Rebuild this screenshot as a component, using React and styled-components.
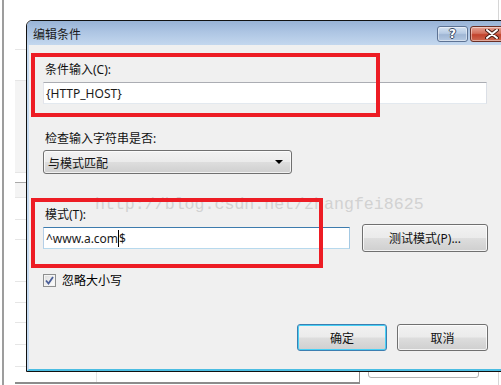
import React from "react";
import styled, { createGlobalStyle } from "styled-components";

const GlobalStyle = createGlobalStyle`
  html, body {
    margin: 0;
    padding: 0;
    background: #ffffff;
  }
  body {
    font-family: "Noto Sans", "Noto Sans CJK SC", sans-serif;
    font-size: 12px;
  }
`;

const Desktop = styled.div`
  position: relative;
  width: 501px;
  height: 385px;
  overflow: hidden;
  background: #ffffff;
`;

// the window lying behind the dialog
const BackWindow = styled.div`
  position: absolute;
  left: 2px;
  top: 0;
  width: 494px;
  height: 385px;
  border-left: 2px solid #9d9d9d;
  border-right: 1px solid #d6d6d6;
  display: flex;
  flex-direction: column;
`;

const BackList = styled.div`
  display: flex;
  flex-direction: column;
  margin-left: 11px;
  width: 470px;
`;

const BackRow = styled.div`
  height: ${(p) => p.$h}px;
  border-bottom: 1px solid ${(p) => (p.$dark ? "#a9a9a9" : "#e6e6e6")};
  background: ${(p) => (p.$shade ? "#f4f4f4" : "transparent")};
`;

const BackFooter = styled.div`
  display: flex;
  align-items: flex-start;
  margin-left: 11px;
  gap: 8px;
`;

const TableBox = styled.div`
  width: 344px;
  height: 15px;
  border-right: 1px solid #8c8c8c;
  border-bottom: 2px solid #8c8c8c;
  display: flex;
`;

const TableCell = styled.div`
  width: 81px;
  border-right: 1px solid #e4e4e4;
`;

const ChipBox = styled.div`
  width: 109px;
  height: 9px;
  border: 1px solid #b3b3b3;
  border-radius: 0 0 3px 3px;
`;

const Dialog = styled.div`
  position: absolute;
  left: 26px;
  top: 20px;
  width: 493px;
  height: 350px;
  border: 1px solid #111111;
  border-radius: 6px 6px 0 0;
  display: flex;
  flex-direction: column;
  background: #f0f0f0;
  overflow: hidden;
`;

const TitleBar = styled.div`
  height: 24px;
  flex-shrink: 0;
  display: flex;
  align-items: center;
  padding: 0 7px 0 6px;
  background: linear-gradient(#98b3d6, #adc5e3 45%, #c3d7ee);
`;

const Title = styled.div`
  flex: 1;
  color: #1b1b1b;
  font-family: "Noto Sans CJK SC", sans-serif;
  font-size: 12px;
  line-height: 16px;
  margin-top: 2px;
`;

const CaptionButton = styled.div`
  width: ${(p) => p.$w}px;
  height: 16px;
  box-sizing: border-box;
  border: 1px solid ${(p) => (p.$close ? "#6b3026" : "#5d7394")};
  border-radius: 3px;
  margin-left: ${(p) => p.$ml || 0}px;
  margin-top: 2px;
  display: flex;
  align-items: center;
  justify-content: center;
  background: ${(p) =>
    p.$close
      ? "linear-gradient(#e6a394, #d26f5b 45%, #c2422c 55%, #cc6a52)"
      : "linear-gradient(#d5e2f1, #b7cbe4 45%, #9fb6d4 55%, #b5c9e2)"};
  box-shadow: inset 0 0 0 1px rgba(255, 255, 255, 0.45);
`;

const HelpGlyph = styled.span`
  font-family: "DejaVu Sans", sans-serif;
  font-weight: bold;
  font-size: 12px;
  line-height: 12px;
  color: #ffffff;
  text-shadow: -1px 0 #3a4a62, 1px 0 #3a4a62, 0 -1px #3a4a62, 0 1px #3a4a62;
`;

const Body = styled.div`
  position: relative;
  flex: 1;
  display: flex;
  flex-direction: column;
  padding: 17px 0 0 14px;
  border-left: 2px solid #c6dbf1;
  border-bottom: 2px solid #4bbde2;
`;

const Label = styled.div`
  height: 16px;
  line-height: 16px;
  margin-top: ${(p) => p.$mt || 0}px;
  margin-left: 2px;
  color: #111111;
  font-family: "Noto Sans", "Noto Sans CJK SC", sans-serif;
`;

const TextBox = styled.div`
  box-sizing: border-box;
  width: ${(p) => p.$w}px;
  height: 22px;
  margin-top: ${(p) => p.$mt || 0}px;
  padding-left: 2px;
  display: flex;
  align-items: center;
  background: #ffffff;
  color: #1a1a1a;
  border: 1px solid;
  border-color: ${(p) =>
    p.$focus ? "#3d7bad #a4c9e3 #b7d9ed #b5cfe7" : "#abadb3 #dbdfe6 #e3e9ef #e2e3ea"};
  white-space: pre;
`;

const Caret = styled.span`
  display: inline-block;
  width: 1px;
  height: 17px;
  background: #000000;
`;

const Select = styled.div`
  box-sizing: border-box;
  width: 249px;
  height: 24px;
  margin-top: 3px;
  padding: 0 8px 0 4px;
  display: flex;
  align-items: center;
  justify-content: space-between;
  border: 1px solid #707070;
  border-radius: 3px;
  background: linear-gradient(#f2f2f2, #ebebeb 48%, #dddddd 52%, #cfcfcf);
  box-shadow: inset 0 0 0 1px rgba(255, 255, 255, 0.7);
  color: #111111;
  font-family: "Noto Sans CJK SC", sans-serif;
`;

const Arrow = styled.span`
  width: 0;
  height: 0;
  border-left: 4px solid transparent;
  border-right: 4px solid transparent;
  border-top: 4px solid #000000;
`;

const PatternRow = styled.div`
  display: flex;
  align-items: center;
  gap: 12px;
  height: 28px;
  margin-top: 1px;
`;

const Button = styled.div`
  box-sizing: border-box;
  width: ${(p) => p.$w}px;
  height: ${(p) => p.$h}px;
  display: flex;
  align-items: center;
  justify-content: center;
  border: 1px solid ${(p) => (p.$default ? "#3c7fb1" : "#707070")};
  border-radius: 3px;
  background: linear-gradient(#f2f2f2, #ebebeb 48%, #dddddd 52%, #cfcfcf);
  box-shadow: inset 0 0 0 1px
    ${(p) => (p.$default ? "#48d0f5" : "rgba(255, 255, 255, 0.75)")};
  color: #111111;
  font-family: "Noto Sans", "Noto Sans CJK SC", sans-serif;
`;

const CheckRow = styled.div`
  display: flex;
  align-items: center;
  gap: 6px;
  height: 16px;
  margin-top: 20px;
`;

const CheckBox = styled.div`
  box-sizing: border-box;
  width: 13px;
  height: 13px;
  border: 1px solid #8e8f8f;
  background: linear-gradient(135deg, #dcdcdc, #ffffff);
  box-shadow: inset 0 0 0 1px #f4f4f4;
  display: flex;
  align-items: center;
  justify-content: center;
`;

const ButtonRow = styled.div`
  display: flex;
  justify-content: flex-end;
  gap: 10px;
  width: 445px;
  margin-top: 36px;
`;

const Watermark = styled.div`
  position: absolute;
  left: 66px;
  top: 150px;
  font-family: "Liberation Mono", monospace;
  font-size: 16.6px;
  line-height: 20px;
  color: #d2d2d2;
  pointer-events: none;
  white-space: nowrap;
`;

const Annotation = styled.div`
  position: absolute;
  left: ${(p) => p.$x}px;
  top: ${(p) => p.$y}px;
  width: ${(p) => p.$w}px;
  height: ${(p) => p.$h}px;
  box-sizing: border-box;
  border: 4px solid #ed1c24;
  pointer-events: none;
`;

const backRows = [
  { h: 49 },
  { h: 30 },
  { h: 91, shade: true },
  { h: 9, dark: true },
  { h: 14, shade: true },
  { h: 21 },
  { h: 19 },
  { h: 41 },
  { h: 20 },
  { h: 19 },
  { h: 21 },
  { h: 21 },
];

export default function App() {
  return (
    <>
      <GlobalStyle />
      <Desktop>
        <BackWindow>
          <BackList>
            {backRows.map((r, i) => (
              <BackRow key={i} $h={r.h} $shade={r.shade} $dark={r.dark} />
            ))}
          </BackList>
          <BackFooter>
            <TableBox>
              <TableCell />
            </TableBox>
            <ChipBox />
          </BackFooter>
        </BackWindow>

        <Dialog>
          <TitleBar>
            <Title>编辑条件</Title>
            <CaptionButton $w={31}>
              <HelpGlyph>?</HelpGlyph>
            </CaptionButton>
            <CaptionButton $w={43} $ml={2} $close>
              <svg width="14" height="10" viewBox="0 0 14 10">
                <path
                  d="M2 1 L12 9 M12 1 L2 9"
                  stroke="#4a2019"
                  strokeWidth="4"
                  strokeLinecap="round"
                />
                <path
                  d="M2 1 L12 9 M12 1 L2 9"
                  stroke="#ffffff"
                  strokeWidth="2"
                  strokeLinecap="round"
                />
              </svg>
            </CaptionButton>
          </TitleBar>

          <Body>
            <Label>条件输入(C):</Label>
            <TextBox $w={444} $mt={4}>
              {"{HTTP_HOST}"}
            </TextBox>

            <Label $mt={27}>检查输入字符串是否:</Label>
            <Select>
              <span>与模式匹配</span>
              <Arrow />
            </Select>

            <Label $mt={33}>模式(T):</Label>
            <PatternRow>
              <TextBox $w={307} $focus>
                ^www.a.com
                <Caret />$
              </TextBox>
              <Button $w={126} $h={28}>
                测试模式(P)...
              </Button>
            </PatternRow>

            <CheckRow>
              <CheckBox>
                <svg width="9" height="9" viewBox="0 0 9 9">
                  <path
                    d="M1 4.5 L3.5 7.5 L8 1"
                    fill="none"
                    stroke="#4b5f98"
                    strokeWidth="1.8"
                  />
                </svg>
              </CheckBox>
              <span>忽略大小写</span>
            </CheckRow>

            <ButtonRow>
              <Button $w={90} $h={27} $default>
                确定
              </Button>
              <Button $w={91} $h={27}>
                取消
              </Button>
            </ButtonRow>

            <Watermark>http://blog.csdn.net/zhangfei8625</Watermark>
          </Body>

          <Annotation $x={4} $y={32} $w={349} $h={64} />
          <Annotation $x={4} $y={177} $w={292} $h={70} />
        </Dialog>
      </Desktop>
    </>
  );
}
